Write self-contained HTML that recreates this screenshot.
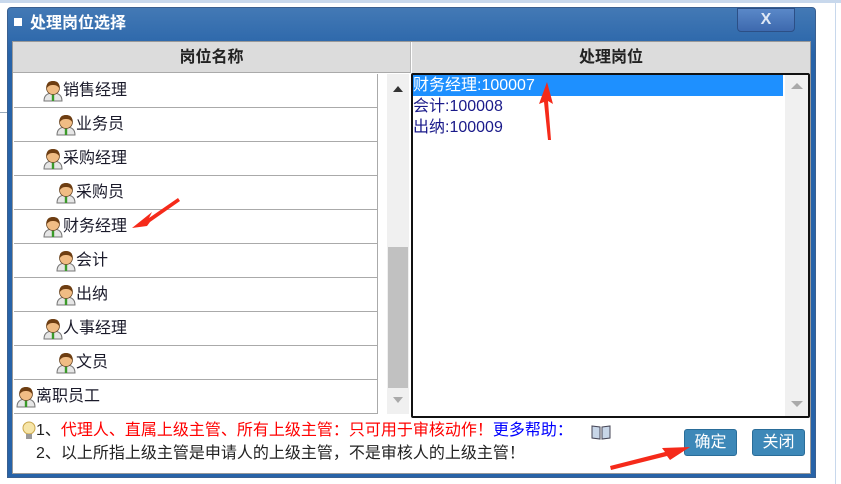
<!DOCTYPE html>
<html><head><meta charset="utf-8"><style>
*{margin:0;padding:0;box-sizing:border-box}
body{width:841px;height:484px;background:#fff;position:relative;overflow:hidden;font-family:"Liberation Sans","Noto Sans CJK SC",sans-serif;font-size:16px}
.abs{position:absolute}
.row{position:absolute;left:14px;width:364px;height:34px;border-bottom:1px solid #aaa;color:#1a1a2a;line-height:34px}
.row svg{position:absolute;top:6px}
.row span{position:absolute}
.it{position:absolute;left:413px;width:370px;height:21px;line-height:21px;color:#1a1a8a;font-size:16px}
</style></head><body>
<div class="abs" style="left:0;top:0;width:841px;height:3px;background:#c8d8ec"></div>
<div class="abs" style="left:0;top:112px;width:8px;height:1px;background:#9ab"></div>
<div class="abs" style="left:835px;top:0;width:1px;height:484px;background:#c8d8ec"></div>
<div class="abs" style="left:7px;top:7px;width:809px;height:471px;background:linear-gradient(#4379b5,#2763a8 10%,#2763a8);border:1px solid #3a5f8f;border-radius:4px 4px 0 0"></div>
<div class="abs" style="left:14px;top:18px;width:8px;height:8px;background:#fff"></div>
<div class="abs" style="left:30px;top:12px;color:#fff;font-weight:bold;font-size:16px;line-height:24px">处理岗位选择</div>
<div class="abs" style="left:737px;top:8px;width:58px;height:24px;background:linear-gradient(#5a88c8,#3d69ae);border:1px solid #2c4f86;border-radius:0 0 4px 4px;color:#dfe8f5;font-weight:bold;text-align:center;line-height:22px;font-size:16px">X</div>
<div class="abs" style="left:12px;top:41px;width:799px;height:433px;background:#fff;border:1px solid #999"></div>
<div class="abs" style="left:13px;top:42px;width:398px;height:31px;background:#dcdcdc;border-right:1px solid #bbb;border-bottom:1px solid #aaa;text-align:center;line-height:31px;font-weight:bold;color:#222">岗位名称</div>
<div class="abs" style="left:412px;top:42px;width:398px;height:31px;background:#dcdcdc;text-align:center;line-height:31px;font-weight:bold;color:#222">处理岗位</div>
<svg width="0" height="0" style="position:absolute"><defs><symbol id="p" viewBox="0 0 20 22">
<path d="M1 21 Q1 13 10 13 Q19 13 19 21Z" fill="#e6e6e6" stroke="#777" stroke-width="1"/>
<rect x="8.8" y="14" width="2.4" height="7" fill="#3a9a2a"/>
<circle cx="10" cy="8" r="6.5" fill="#f0bc84" stroke="#6a4a2a" stroke-width="0.8"/>
<path d="M3.5 8.5 Q3 1 10 1 Q17 1 16.5 8.5 Q14 4.5 10 5 Q6 4.5 3.5 8.5Z" fill="#6e3e12"/>
</symbol></defs></svg>
<div class="row" style="top:74px"><svg width="20" height="22" style="left:29px"><use href="#p"/></svg><span style="left:49px">销售经理</span></div>
<div class="row" style="top:108px"><svg width="20" height="22" style="left:42px"><use href="#p"/></svg><span style="left:62px">业务员</span></div>
<div class="row" style="top:142px"><svg width="20" height="22" style="left:29px"><use href="#p"/></svg><span style="left:49px">采购经理</span></div>
<div class="row" style="top:176px"><svg width="20" height="22" style="left:42px"><use href="#p"/></svg><span style="left:62px">采购员</span></div>
<div class="row" style="top:210px"><svg width="20" height="22" style="left:29px"><use href="#p"/></svg><span style="left:49px">财务经理</span></div>
<div class="row" style="top:244px"><svg width="20" height="22" style="left:42px"><use href="#p"/></svg><span style="left:62px">会计</span></div>
<div class="row" style="top:278px"><svg width="20" height="22" style="left:42px"><use href="#p"/></svg><span style="left:62px">出纳</span></div>
<div class="row" style="top:312px"><svg width="20" height="22" style="left:29px"><use href="#p"/></svg><span style="left:49px">人事经理</span></div>
<div class="row" style="top:346px"><svg width="20" height="22" style="left:42px"><use href="#p"/></svg><span style="left:62px">文员</span></div>
<div class="row" style="top:380px"><svg width="20" height="22" style="left:2px"><use href="#p"/></svg><span style="left:22px">离职员工</span></div>
<div class="abs" style="left:377px;top:74px;width:1px;height:340px;background:#aaa"></div>
<div class="abs" style="left:387px;top:74px;width:22px;height:340px;background:#f0f0f0"></div>
<div class="abs" style="left:393px;top:86px;width:0;height:0;border:5px solid transparent;border-bottom:6px solid #333;border-top:0"></div>
<div class="abs" style="left:388px;top:247px;width:20px;height:141px;background:#c1c1c1"></div>
<div class="abs" style="left:393px;top:397px;width:0;height:0;border:5px solid transparent;border-top:6px solid #aaa;border-bottom:0"></div>
<div class="abs" style="left:411px;top:73px;width:399px;height:345px;border:2px solid #111;border-radius:2px;background:#fff"></div>
<div class="abs" style="left:413px;top:75px;width:370px;height:21px;background:#1e90ff"></div>
<div class="it" style="top:75px;color:#fff">财务经理:100007</div>
<div class="it" style="top:96px">会计:100008</div>
<div class="it" style="top:117px">出纳:100009</div>
<div class="abs" style="left:785px;top:75px;width:23px;height:341px;background:#f0f0f0"></div>
<div class="abs" style="left:791px;top:83px;width:0;height:0;border:6px solid transparent;border-bottom:6px solid #aaa;border-top:0"></div>
<div class="abs" style="left:791px;top:401px;width:0;height:0;border:6px solid transparent;border-top:6px solid #aaa;border-bottom:0"></div>
<svg class="abs" style="left:22px;top:421px" width="14" height="20" viewBox="0 0 14 20"><circle cx="7" cy="7" r="6" fill="#f6e5a8" stroke="#c9a64a"/><rect x="4" y="13" width="6" height="5" fill="#999"/></svg>
<div class="abs" style="left:36px;top:420px;font-size:16px;line-height:22px;white-space:nowrap;color:#222">1、<span style="color:#f00">代理人、直属上级主管、所有上级主管：只可用于审核动作！</span><span style="color:#00f">更多帮助：</span></div>
<svg class="abs" style="left:591px;top:424px" width="20" height="16" viewBox="0 0 20 16"><path d="M1 2 L9 3 L9 15 L1 14Z M11 3 L19 2 L19 14 L11 15Z" fill="#c8d6e8" stroke="#445" stroke-width="1"/></svg>
<div class="abs" style="left:36px;top:443px;font-size:16px;line-height:22px;white-space:nowrap;color:#222">2、以上所指上级主管是申请人的上级主管，不是审核人的上级主管！</div>
<div class="abs" style="left:684px;top:429px;width:53px;height:27px;background:#3d88b8;border:1px solid #2a6d99;border-radius:3px;color:#fff;text-align:center;line-height:25px">确定</div>
<div class="abs" style="left:752px;top:429px;width:53px;height:27px;background:#3d88b8;border:1px solid #2a6d99;border-radius:3px;color:#fff;text-align:center;line-height:25px">关闭</div>
<svg class="abs" style="left:0;top:0" width="841" height="484">
<polygon points="178,198 149,218 152,212 132,228 147,226 150,222 180,201" fill="#f52a1a"/>
<polygon points="547,82 539,104 544,102 548,140 551,140 548,101 553,104" fill="#f52a1a"/>
<polygon points="690,447 662,448 665,452 610,466 611,470 667,456 670,460" fill="#f52a1a"/>
</svg>
</body></html>
